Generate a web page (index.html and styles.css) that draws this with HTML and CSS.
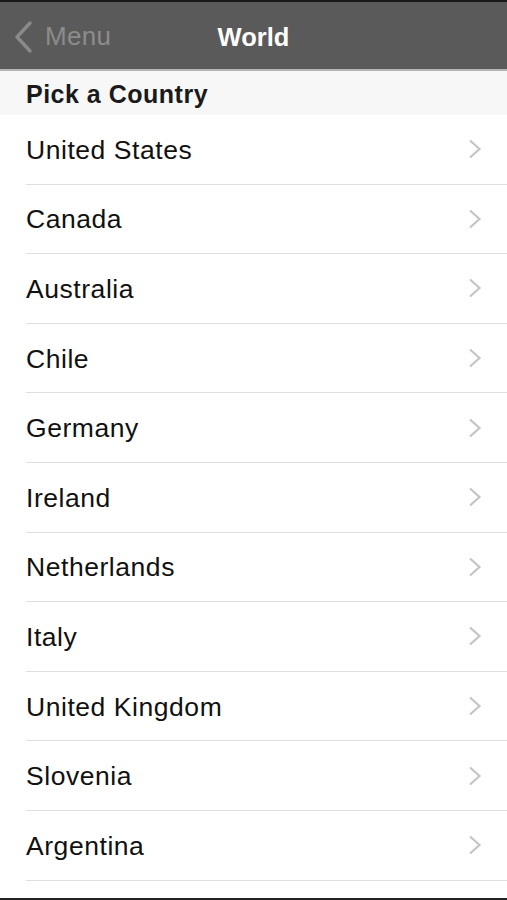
FILE: index.html
```html
<!DOCTYPE html>
<html>
<head>
<meta charset="utf-8">
<link rel="stylesheet" href="styles.css">
</head>
<body>
<div class="screen">
  <header class="nav">
    <div class="back">
      <svg class="back-icon" width="22" height="32" viewBox="0 0 22 32"><path d="M17 2 L4 16 L17 30" fill="none" stroke="#8a8a8a" stroke-width="3.4" stroke-linecap="round" stroke-linejoin="round"/></svg>
      <span class="back-label">Menu</span>
    </div>
    <div class="title">World</div>
  </header>
  <div class="section">Pick a Country</div>
  <ul class="list">
    <li class="row"><span class="label">United States</span><svg class="chev" width="14" height="20" viewBox="0 0 14 20"><path d="M2 1.5 L11.5 10 L2 18.5" fill="none" stroke="#c4c4c8" stroke-width="2.2"/></svg></li>
    <li class="row"><span class="label">Canada</span><svg class="chev" width="14" height="20" viewBox="0 0 14 20"><path d="M2 1.5 L11.5 10 L2 18.5" fill="none" stroke="#c4c4c8" stroke-width="2.2"/></svg></li>
    <li class="row"><span class="label">Australia</span><svg class="chev" width="14" height="20" viewBox="0 0 14 20"><path d="M2 1.5 L11.5 10 L2 18.5" fill="none" stroke="#c4c4c8" stroke-width="2.2"/></svg></li>
    <li class="row"><span class="label">Chile</span><svg class="chev" width="14" height="20" viewBox="0 0 14 20"><path d="M2 1.5 L11.5 10 L2 18.5" fill="none" stroke="#c4c4c8" stroke-width="2.2"/></svg></li>
    <li class="row"><span class="label">Germany</span><svg class="chev" width="14" height="20" viewBox="0 0 14 20"><path d="M2 1.5 L11.5 10 L2 18.5" fill="none" stroke="#c4c4c8" stroke-width="2.2"/></svg></li>
    <li class="row"><span class="label">Ireland</span><svg class="chev" width="14" height="20" viewBox="0 0 14 20"><path d="M2 1.5 L11.5 10 L2 18.5" fill="none" stroke="#c4c4c8" stroke-width="2.2"/></svg></li>
    <li class="row"><span class="label">Netherlands</span><svg class="chev" width="14" height="20" viewBox="0 0 14 20"><path d="M2 1.5 L11.5 10 L2 18.5" fill="none" stroke="#c4c4c8" stroke-width="2.2"/></svg></li>
    <li class="row"><span class="label">Italy</span><svg class="chev" width="14" height="20" viewBox="0 0 14 20"><path d="M2 1.5 L11.5 10 L2 18.5" fill="none" stroke="#c4c4c8" stroke-width="2.2"/></svg></li>
    <li class="row"><span class="label">United Kingdom</span><svg class="chev" width="14" height="20" viewBox="0 0 14 20"><path d="M2 1.5 L11.5 10 L2 18.5" fill="none" stroke="#c4c4c8" stroke-width="2.2"/></svg></li>
    <li class="row"><span class="label">Slovenia</span><svg class="chev" width="14" height="20" viewBox="0 0 14 20"><path d="M2 1.5 L11.5 10 L2 18.5" fill="none" stroke="#c4c4c8" stroke-width="2.2"/></svg></li>
    <li class="row"><span class="label">Argentina</span><svg class="chev" width="14" height="20" viewBox="0 0 14 20"><path d="M2 1.5 L11.5 10 L2 18.5" fill="none" stroke="#c4c4c8" stroke-width="2.2"/></svg></li>
  </ul>
</div>
</body>
</html>
```

FILE: styles.css
```css
html, body {
  margin: 0;
  padding: 0;
  background: #ffffff;
}
body {
  font-family: "Liberation Sans", Arial, sans-serif;
  width: 507px;
  height: 900px;
  overflow: hidden;
  border-bottom: 2px solid #222;
  box-sizing: border-box;
}
.screen {
  display: flex;
  flex-direction: column;
  height: 898px;
}
.nav {
  position: relative;
  height: 71px;
  background: #5a5a5a;
  border-top: 2px solid #1a1a1a;
  border-bottom: 2px solid #b4b4b4;
  display: flex;
  align-items: center;
  justify-content: center;
  flex-shrink: 0;
  box-sizing: border-box;
  padding-top: 3px;
}
.back {
  position: absolute;
  left: 13px;
  top: 0;
  bottom: 0;
  display: flex;
  align-items: center;
  gap: 10px;
  padding-top: 2px;
}
.back-icon {
  display: block;
}
.back-label {
  color: #8c8c8c;
  font-size: 26px;
  letter-spacing: 0.3px;
}
.title {
  color: #ffffff;
  font-weight: bold;
  font-size: 25.5px;
}
.section {
  height: 44px;
  background: #f7f7f7;
  color: #1a1a1a;
  font-weight: bold;
  font-size: 25px;
  letter-spacing: 0.5px;
  padding-left: 26px;
  display: flex;
  align-items: center;
  box-sizing: border-box;
  padding-top: 3px;
  flex-shrink: 0;
}
.list {
  list-style: none;
  margin: 0;
  padding: 0 0 0 26px;
}
.row {
  height: 69.6px;
  box-sizing: border-box;
  border-bottom: 1px solid #e0e0e0;
  display: flex;
  align-items: center;
  justify-content: space-between;
  padding-right: 25px;
  padding-top: 2px;
}
.label {
  font-size: 26.5px;
  letter-spacing: 0.55px;
  color: #111111;
}
.chev {
  display: block;
  margin-top: -2px;
}
```
